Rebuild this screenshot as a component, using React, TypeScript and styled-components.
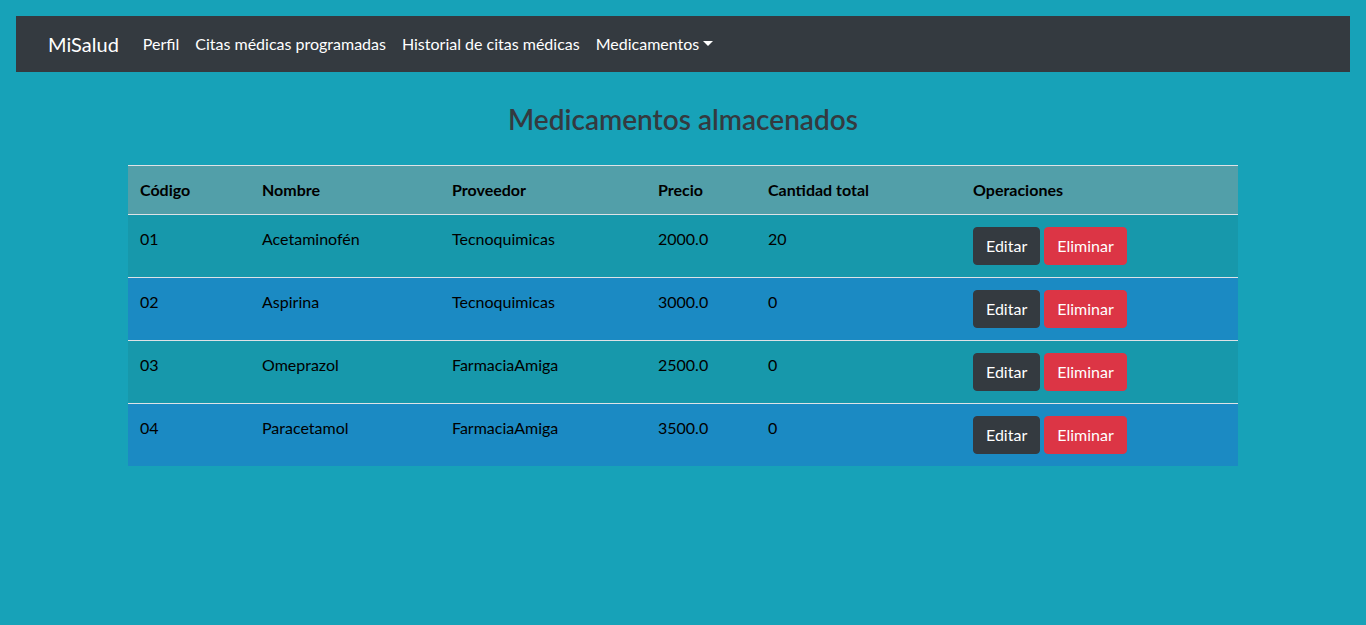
import React from "react";
import styled, { createGlobalStyle } from "styled-components";

const Global = createGlobalStyle`
  html, body { margin: 0; padding: 0; }
  body {
    background: #17a2b8;
    font-family: Lato, "Noto Sans", Arial, sans-serif;
    font-size: 16px;
    line-height: 1.5;
    color: #212529;
  }
  * { box-sizing: border-box; }
`;

const Page = styled.div`
  padding: 16px;
`;

const Navbar = styled.nav`
  background: #343a40;
  height: 56px;
  display: flex;
  align-items: center;
  padding: 0 32px;
`;

const Brand = styled.a`
  color: #fff;
  font-size: 20px;
  line-height: 30px;
  margin-right: 16px;
  text-decoration: none;
`;

const NavLink = styled.a`
  color: #fff;
  font-size: 16px;
  padding: 8px;
  text-decoration: none;
  display: flex;
  align-items: center;
`;

const Caret = styled.span`
  display: inline-block;
  margin-left: 4px;
  width: 0;
  height: 0;
  border-top: 5px solid #fff;
  border-left: 5px solid transparent;
  border-right: 5px solid transparent;
  transform: translateY(-1px);
`;

const Container = styled.main`
  width: 1110px;
  margin: 0 auto;
`;

const Title = styled.h3`
  text-align: center;
  color: #343a40;
  font-size: 28px;
  font-weight: 600;
  line-height: 1.2;
  margin: 31px 0 28px;
`;

const Table = styled.table`
  width: 100%;
  border-collapse: collapse;
`;

const HeadRow = styled.tr`
  background: #529fa9;
`;

const Row = styled.tr<{ $alt?: boolean }>`
  background: ${(p) => (p.$alt ? "#1b8ac3" : "#1798ab")};
`;

const Th = styled.th<{ $w: number }>`
  width: ${(p) => p.$w}px;
  text-align: left;
  font-weight: 700;
  color: #000;
  padding: 12px;
  border-top: 1px solid #dee2e6;
  border-bottom: 1px solid #dee2e6;
  vertical-align: bottom;
`;

const Td = styled.td`
  padding: 12px;
  color: #000;
  border-top: 1px solid #dee2e6;
  vertical-align: top;
`;

const Actions = styled.div`
  display: flex;
  gap: 4px;
`;

const Btn = styled.button<{ $danger?: boolean }>`
  font-family: inherit;
  font-size: 16px;
  line-height: 24px;
  height: 38px;
  padding: 6px 12px;
  border-radius: 4px;
  border: 1px solid ${(p) => (p.$danger ? "#dc3545" : "#343a40")};
  background: ${(p) => (p.$danger ? "#dc3545" : "#343a40")};
  color: #fff;
`;

const data = [
  ["01", "Acetaminofén", "Tecnoquimicas", "2000.0", "20"],
  ["02", "Aspirina", "Tecnoquimicas", "3000.0", "0"],
  ["03", "Omeprazol", "FarmaciaAmiga", "2500.0", "0"],
  ["04", "Paracetamol", "FarmaciaAmiga", "3500.0", "0"],
];

export default function App() {
  return (
    <Page>
      <Global />
      <Navbar>
        <Brand href="#">MiSalud</Brand>
        <NavLink href="#">Perfil</NavLink>
        <NavLink href="#">Citas médicas programadas</NavLink>
        <NavLink href="#">Historial de citas médicas</NavLink>
        <NavLink href="#">
          Medicamentos
          <Caret />
        </NavLink>
      </Navbar>
      <Container>
        <Title>Medicamentos almacenados</Title>
        <Table>
          <thead>
            <HeadRow>
              <Th $w={122}>Código</Th>
              <Th $w={190}>Nombre</Th>
              <Th $w={206}>Proveedor</Th>
              <Th $w={110}>Precio</Th>
              <Th $w={205}>Cantidad total</Th>
              <Th $w={277}>Operaciones</Th>
            </HeadRow>
          </thead>
          <tbody>
            {data.map((r, i) => (
              <Row key={r[0]} $alt={i % 2 === 1}>
                {r.map((c, j) => (
                  <Td key={j}>{c}</Td>
                ))}
                <Td>
                  <Actions>
                    <Btn>Editar</Btn>
                    <Btn $danger>Eliminar</Btn>
                  </Actions>
                </Td>
              </Row>
            ))}
          </tbody>
        </Table>
      </Container>
    </Page>
  );
}
